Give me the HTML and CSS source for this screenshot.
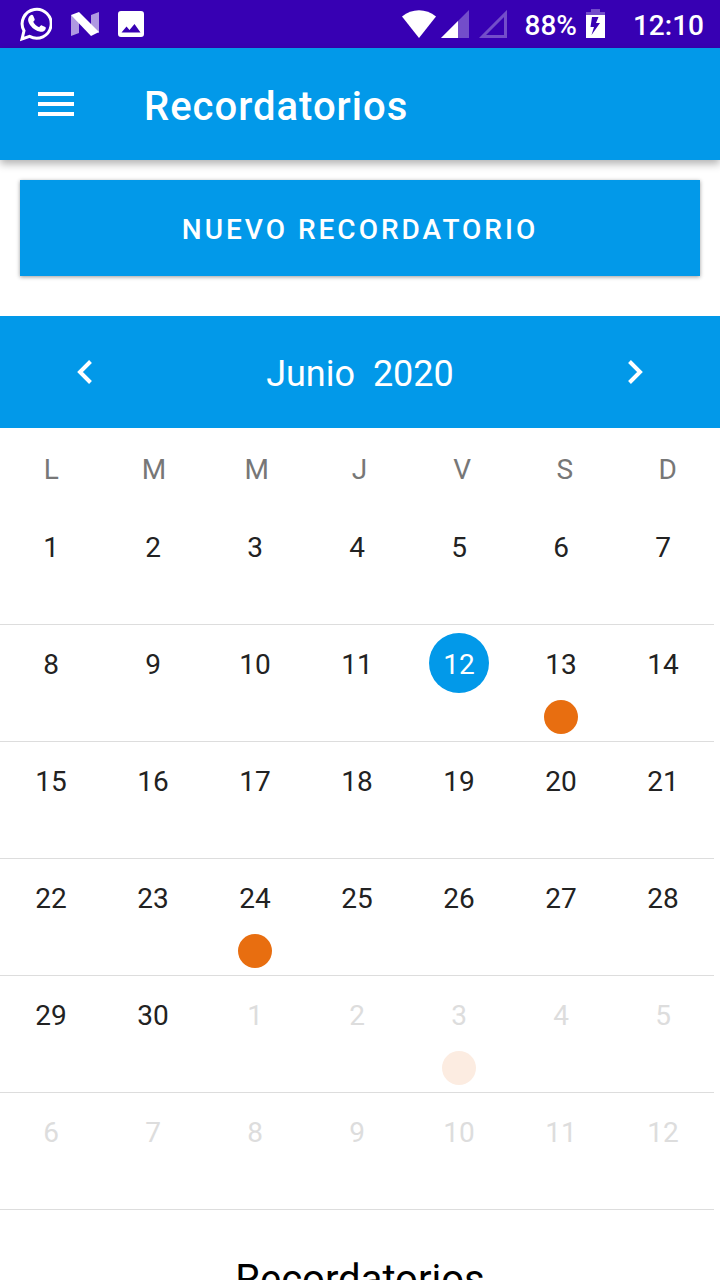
FILE: index.html
```html
<!DOCTYPE html>
<html lang="es">
<head>
<meta charset="utf-8">
<meta name="viewport" content="width=device-width, initial-scale=1">
<title>Recordatorios</title>
<link rel="stylesheet" href="styles.css">
</head>
<body>
<div class="status-bar">
  <div class="status-group">
    <svg width="32" height="36" viewBox="0 0 32 36" aria-label="WhatsApp" role="img">
      <path d="M2 33 4 24.800A14.500 14.500 0 1 1 9.600 30.400Z" fill="none" stroke="#fff" stroke-width="3"/>
      <path d="M10.600 9.300c.8-.8 2-.7 2.500.3l1.500 3.300c.3.7 0 1.400-1.400 2.900 1.300 2.600 3.200 4.300 6 5.500 1.500-1.900 2-2.200 2.700-1.900l3.400 1.600c.7.4.6 1.400.2 2.300-1.100 2.300-3.700 3-6 2.300-5.600-1.700-9.100-5-11-9.600-1-2.600-.1-5.100 2.100-6.700Z" fill="#fff"/>
    </svg>
    <svg width="28" height="24" viewBox="0 0 28 24" aria-label="Android" role="img">
      <path d="M0 3 8 6V21L0 24Z M20 3 28 0V21L20 18Z" fill="#fff" opacity=".6"/>
      <path d="M0 3 8 0 28 20 20 24Z" fill="#fff"/>
    </svg>
    <svg width="26" height="26" viewBox="0 0 26 26" aria-label="Imagen" role="img">
      <path fill="#fff" fill-rule="evenodd" d="M3 0H23a3 3 0 0 1 3 3V23a3 3 0 0 1-3 3H3a3 3 0 0 1-3-3V3a3 3 0 0 1 3-3ZM3.500 21.500H22.500L16.500 13 11.500 19 8.500 15.500Z"/>
    </svg>
  </div>
  <div class="status-group status-right">
    <div class="signals">
      <svg width="36" height="28" viewBox="0 0 36 28" aria-label="Wi-Fi" role="img"><path d="M1 6.500C11-2 25-2 35 6.500L18 28Z" fill="#fff"/></svg>
      <svg width="28" height="28" viewBox="0 0 28 28" aria-label="Señal" role="img"><path d="M0 28 28 0V28Z" fill="#fff" opacity=".3"/><path d="M0 28 17 11V28Z" fill="#fff"/></svg>
      <svg class="second-sim" width="28" height="28" viewBox="0 0 28 28" aria-label="Sin señal" role="img"><path d="M3.500 26.500 26.500 3.500V26.500Z" fill="none" stroke="#fff" stroke-width="3" opacity=".3"/></svg>
    </div>
    <div class="battery">
      <span>88%</span>
      <svg width="19" height="30" viewBox="0 0 19 30" aria-label="Cargando" role="img"><path d="M0 6V3H5V0H14V3H19V6Z" fill="#fff" opacity=".3"/><path fill="#fff" fill-rule="evenodd" d="M0 6H19V29H0ZM12.500 8H6L4.500 18H8L5.500 26 14 14H10Z"/></svg>
    </div>
    <time>12:10</time>
  </div>
</div>
<header class="toolbar">
  <button class="menu-button" type="button" aria-label="Menú">
    <svg width="36" height="24" viewBox="0 0 36 24"><path d="M0 2H36M0 12H36M0 22H36" stroke="#fff" stroke-width="4"/></svg>
  </button>
  <h1 class="toolbar-title">Recordatorios</h1>
</header>
<main class="content">
  <button class="new-button" type="button">Nuevo recordatorio</button>
  <section class="calendar">
    <div class="month-bar">
      <button class="month-arrow" type="button" aria-label="Mes anterior"><svg width="16" height="26" viewBox="0 0 16 26"><path d="M13.500 2.500 3 13 13.500 23.500" fill="none" stroke="#fff" stroke-width="4"/></svg></button>
      <h2 class="month-title">Junio&nbsp; 2020</h2>
      <button class="month-arrow" type="button" aria-label="Mes siguiente"><svg width="16" height="26" viewBox="0 0 16 26"><path d="M2.500 2.500 13 13 2.500 23.500" fill="none" stroke="#fff" stroke-width="4"/></svg></button>
    </div>
    <table class="month">
      <thead><tr class="weekdays"><th>L</th><th>M</th><th>M</th><th>J</th><th>V</th><th>S</th><th>D</th></tr></thead>
      <tbody class="weeks">
        <tr class="week"><td>1</td><td>2</td><td>3</td><td>4</td><td>5</td><td>6</td><td>7</td></tr>
        <tr class="week"><td>8</td><td>9</td><td>10</td><td>11</td><td><span class="today">12</span></td><td class="event">13</td><td>14</td></tr>
        <tr class="week"><td>15</td><td>16</td><td>17</td><td>18</td><td>19</td><td>20</td><td>21</td></tr>
        <tr class="week"><td>22</td><td>23</td><td class="event">24</td><td>25</td><td>26</td><td>27</td><td>28</td></tr>
        <tr class="week"><td>29</td><td>30</td><td class="other">1</td><td class="other">2</td><td class="other event">3</td><td class="other">4</td><td class="other">5</td></tr>
        <tr class="week"><td class="other">6</td><td class="other">7</td><td class="other">8</td><td class="other">9</td><td class="other">10</td><td class="other">11</td><td class="other">12</td></tr>
      </tbody>
    </table>
  </section>
  <h2 class="list-title">Recordatorios</h2>
</main>
</body>
</html>
```
FILE: styles.css
```css
* {
  box-sizing: border-box;
}

body {
  margin: 0;
  height: 100vh;
  display: flex;
  flex-direction: column;
  overflow: hidden;
  background: #fff;
  color: #222;
  font-family: Roboto, sans-serif;
  font-size: 28px;
}

h1,
h2 {
  margin: 0;
}

button {
  margin: 0;
  padding: 0;
  border: 0;
  background: none;
  color: inherit;
  font: inherit;
}

svg {
  display: block;
}

.status-bar {
  flex: none;
  height: 48px;
  padding: 0 16px 0 20px;
  display: flex;
  justify-content: space-between;
  align-items: center;
  background: #3700b3;
  color: #fff;
  font-weight: 500;
}

.status-group {
  display: flex;
  align-items: center;
  gap: 19px;
}

.status-right {
  gap: 28px;
}

.signals {
  display: flex;
  gap: 4px;
  margin-right: -10px;
}

.second-sim {
  margin-left: 6px;
}

.battery {
  display: flex;
  align-items: center;
  gap: 9px;
}

.status-right span,
.status-right time {
  line-height: 32px;
  padding-top: 4px;
}

.toolbar {
  flex: none;
  height: 112px;
  padding: 0 38px;
  display: flex;
  align-items: center;
  gap: 70px;
  background: #0299e9;
  color: #fff;
  box-shadow: 0 4px 8px rgba(0, 0, 0, 0.3);
  z-index: 1;
}

.toolbar-title {
  padding-top: 4px;
  font-size: 40px;
  font-weight: 500;
  letter-spacing: 1px;
}

.content {
  flex: 1;
  min-height: 0;
  overflow-y: auto;
  scrollbar-width: none;
}

.new-button {
  display: block;
  width: calc(100% - 40px);
  height: 96px;
  margin: 20px 20px 40px;
  padding-top: 2px;
  background: #0299e9;
  box-shadow: 0 1px 4px rgba(0, 0, 0, 0.4);
  color: #fff;
  font-weight: 500;
  letter-spacing: 3px;
  text-transform: uppercase;
}

.month-bar {
  height: 112px;
  padding: 0 77px;
  display: flex;
  align-items: center;
  justify-content: space-between;
  background: #0299e9;
  color: #fff;
}

.month-title {
  padding-top: 4px;
  font-size: 36px;
  font-weight: 400;
}

.month,
.month thead,
.weeks {
  display: block;
}

.weekdays,
.week {
  display: grid;
  grid-template-columns: repeat(7, 1fr);
  text-align: center;
}

.weekdays {
  margin-right: 1px;
}

.weekdays th {
  padding: 0;
  height: 80px;
  line-height: 84px;
  color: #777;
  font-weight: 400;
}

.weeks {
  margin-right: 6px;
}

.week {
  height: 117px;
  padding-top: 8px;
  border-bottom: 1px solid #ddd;
}

.week td {
  display: flex;
  flex-direction: column;
  align-items: center;
  padding: 0;
  line-height: 64px;
}

.today {
  width: 60px;
  height: 60px;
  border-radius: 50%;
  background: #0299e9;
  color: #fff;
}

.event::after {
  content: "";
  width: 34px;
  height: 34px;
  margin-top: 3px;
  border-radius: 50%;
  background: #e86e10;
}

.week .other {
  color: #ddd;
}

.other.event::after {
  background: #fcece1;
}

.list-title {
  padding: 42px 20px 40px;
  color: #000;
  font-size: 40px;
  font-weight: 400;
  line-height: 56px;
  text-align: center;
}
```
